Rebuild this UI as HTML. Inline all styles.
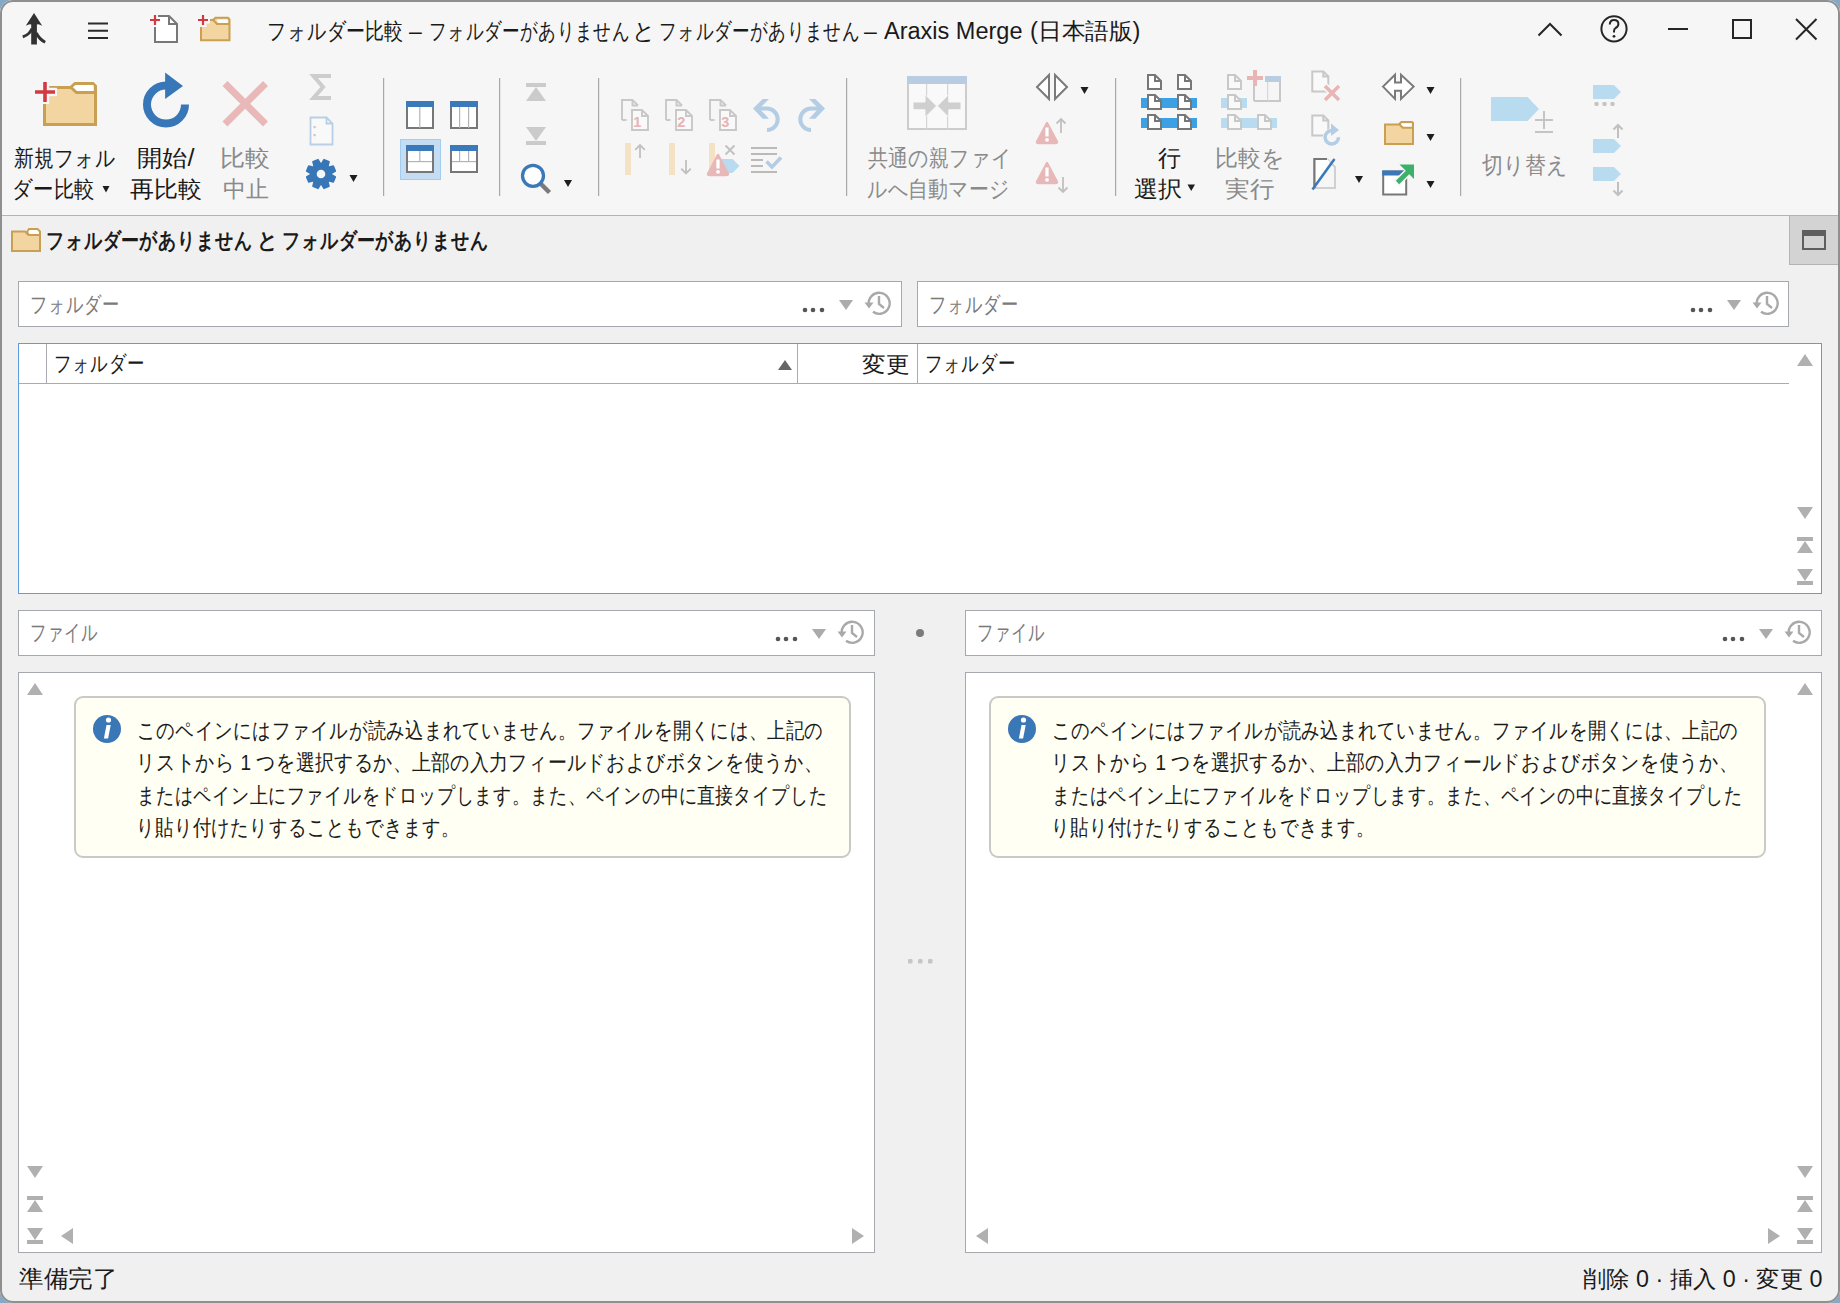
<!DOCTYPE html>
<html><head><meta charset="utf-8">
<style>
html,body{margin:0;padding:0}
body{width:1840px;height:1303px;position:relative;overflow:hidden;background:#86aac6;font-family:"Liberation Sans",sans-serif;color:#1a1a1a}
.a{position:absolute}
.win{left:0;top:0;width:1840px;height:1303px;border-radius:13px;background:#f0f0f0;overflow:hidden}
.frame{left:0;top:0;width:1840px;height:1303px;box-sizing:border-box;border:2px solid #8f8f8f;border-radius:13px;z-index:50}
.rib{left:0;top:0;width:1840px;height:215px;background:#f6f6f6;border-bottom:1px solid #b3b3b3}
.t{white-space:nowrap;transform-origin:0 0;line-height:30px}
.box{background:#fff;box-sizing:border-box;border:1px solid #a5a8ad}
svg{position:absolute;overflow:visible}
</style></head><body>
<div class="a win">
  <div class="a rib"></div>

  <!-- title -->
  <div class="a t" style="left:267.3px;top:16px;font-size:23px;transform:scaleX(0.827)">フォルダー比較</div>
  <div class="a t" style="left:409.0px;top:16px;font-size:23px;transform:scaleX(1.000)">–</div>
  <div class="a t" style="left:428.5px;top:16px;font-size:23px;transform:scaleX(0.764)">フォルダーがありません</div>
  <div class="a t" style="left:632.0px;top:16px;font-size:23px;transform:scaleX(1.000)">と</div>
  <div class="a t" style="left:658.5px;top:16px;font-size:23px;transform:scaleX(0.764)">フォルダーがありません</div>
  <div class="a t" style="left:864.0px;top:16px;font-size:23px;transform:scaleX(1.000)">–</div>
  <div class="a t" style="left:884.0px;top:16px;font-size:23px;transform:scaleX(1.022)">Araxis Merge</div>
  <div class="a t" style="left:1030.0px;top:16px;font-size:23px;transform:scaleX(1.029)">(日本語版)</div>

  <!-- ribbon labels -->
  <div class="a t" style="left:14px;top:143px;font-size:23px;transform:scaleX(0.862)">新規フォル</div>
  <div class="a t" style="left:12px;top:174px;font-size:23px;transform:scaleX(0.888)">ダー比較</div>
  <div class="a t" style="left:137px;top:143px;font-size:23px;transform:scaleX(1.098)">開始/</div>
  <div class="a t" style="left:130px;top:174px;font-size:23px;transform:scaleX(1.044)">再比較</div>
  <div class="a t" style="left:220px;top:143px;font-size:23px;color:#8a8a8a;transform:scaleX(1.093)">比較</div>
  <div class="a t" style="left:223px;top:174px;font-size:23px;color:#8a8a8a">中止</div>
  <div class="a t" style="left:868px;top:143px;font-size:23px;color:#8a8a8a;transform:scaleX(0.869)">共通の親ファイ</div>
  <div class="a t" style="left:867px;top:174px;font-size:23px;color:#8a8a8a;transform:scaleX(0.863)">ルへ自動マージ</div>
  <div class="a t" style="left:1158px;top:143px;font-size:23px">行</div>
  <div class="a t" style="left:1134px;top:174px;font-size:23px;transform:scaleX(1.045)">選択</div>
  <div class="a t" style="left:1215px;top:143px;font-size:23px;color:#8a8a8a">比較を</div>
  <div class="a t" style="left:1225px;top:174px;font-size:23px;color:#8a8a8a;transform:scaleX(1.068)">実行</div>
  <div class="a t" style="left:1482px;top:150px;font-size:23px;color:#8a8a8a;transform:scaleX(0.912)">切り替え</div>

  <!-- folder header -->
  <div class="a t" style="left:46.4px;top:226px;font-size:22px;font-weight:bold;transform:scaleX(0.819)">フォルダーがありません</div>
  <div class="a t" style="left:257.2px;top:226px;font-size:22px;font-weight:bold;transform:scaleX(0.933)">と</div>
  <div class="a t" style="left:282.4px;top:226px;font-size:22px;font-weight:bold;transform:scaleX(0.819)">フォルダーがありません</div>
  <div class="a" style="left:1789px;top:216px;width:49px;height:49px;background:#d3d3d3;box-sizing:border-box;border-left:1px solid #b4b4b4;border-bottom:1px solid #b4b4b4"></div>

  <!-- folder inputs -->
  <div class="a box" style="left:18px;top:281px;width:884px;height:46px"></div>
  <div class="a box" style="left:917px;top:281px;width:872px;height:46px"></div>
  <div class="a t" style="left:30px;top:290px;font-size:22px;color:#7a7a7a;transform:scaleX(0.782)">フォルダー</div>
  <div class="a t" style="left:929px;top:290px;font-size:22px;color:#7a7a7a;transform:scaleX(0.782)">フォルダー</div>

  <!-- folder list -->
  <div class="a" style="left:18px;top:343px;width:1804px;height:251px;background:#fff;box-sizing:border-box;border:1px solid #5d9de0"></div>
  <div class="a" style="left:19px;top:383px;width:1770px;height:1px;background:#a9abb0"></div>
  <div class="a" style="left:46px;top:344px;width:1px;height:39px;background:#a9abb0"></div>
  <div class="a" style="left:797px;top:344px;width:1px;height:39px;background:#a9abb0"></div>
  <div class="a" style="left:917px;top:344px;width:1px;height:39px;background:#a9abb0"></div>
  <div class="a t" style="left:54px;top:349px;font-size:22px;transform:scaleX(0.791)">フォルダー</div>
  <div class="a t" style="left:862px;top:350px;font-size:22px;transform:scaleX(1.071)">変更</div>
  <div class="a t" style="left:925px;top:349px;font-size:22px;transform:scaleX(0.791)">フォルダー</div>

  <!-- file inputs -->
  <div class="a box" style="left:18px;top:610px;width:857px;height:46px"></div>
  <div class="a box" style="left:965px;top:610px;width:857px;height:46px"></div>
  <div class="a t" style="left:30px;top:618px;font-size:22px;color:#7a7a7a;transform:scaleX(0.742)">ファイル</div>
  <div class="a t" style="left:977px;top:618px;font-size:22px;color:#7a7a7a;transform:scaleX(0.742)">ファイル</div>

  <!-- file panes -->
  <div class="a box" style="left:18px;top:672px;width:857px;height:581px"></div>
  <div class="a box" style="left:965px;top:672px;width:857px;height:581px"></div>

  <!-- info boxes -->
  <div class="a" style="left:74px;top:696px;width:777px;height:162px;box-sizing:border-box;border:2px solid #c9c9c6;border-radius:9px;background:#fffff4"></div>
  <div class="a" style="left:989px;top:696px;width:777px;height:162px;box-sizing:border-box;border:2px solid #c9c9c6;border-radius:9px;background:#fffff4"></div>
  <div class="a t" style="left:137px;top:716px;font-size:22px;transform:scaleX(0.836)">このペインにはファイルが読み込まれていません。ファイルを開くには、上記の</div>
  <div class="a t" style="left:136px;top:748px;font-size:22px;transform:scaleX(0.862)">リストから 1 つを選択するか、上部の入力フィールドおよびボタンを使うか、</div>
  <div class="a t" style="left:137px;top:781px;font-size:22px;transform:scaleX(0.817)">またはペイン上にファイルをドロップします。また、ペインの中に直接タイプした</div>
  <div class="a t" style="left:136px;top:813px;font-size:22px;transform:scaleX(0.834)">り貼り付けたりすることもできます。</div>
  <div class="a t" style="left:1052px;top:716px;font-size:22px;transform:scaleX(0.836)">このペインにはファイルが読み込まれていません。ファイルを開くには、上記の</div>
  <div class="a t" style="left:1051px;top:748px;font-size:22px;transform:scaleX(0.862)">リストから 1 つを選択するか、上部の入力フィールドおよびボタンを使うか、</div>
  <div class="a t" style="left:1052px;top:781px;font-size:22px;transform:scaleX(0.817)">またはペイン上にファイルをドロップします。また、ペインの中に直接タイプした</div>
  <div class="a t" style="left:1051px;top:813px;font-size:22px;transform:scaleX(0.834)">り貼り付けたりすることもできます。</div>

  <!-- status -->
  <div class="a t" style="left:19px;top:1264px;font-size:24px;transform:scaleX(1.022)">準備完了</div>
  <div class="a t" style="left:1583px;top:1264px;font-size:23px;transform:scaleX(1.013)">削除 0 · 挿入 0 · 変更 0</div>
</div>
<svg class="a" style="left:0;top:0;z-index:10" width="1840" height="1303" viewBox="0 0 1840 1303"><circle cx="805" cy="310" r="2.3" fill="#555"/><circle cx="813" cy="310" r="2.3" fill="#555"/><circle cx="822" cy="310" r="2.3" fill="#555"/><path d="M839,300 h14 l-7,10z" fill="#ababab"/><g fill="none" stroke="#a9a9a9" stroke-width="2.4"><path d="M868.8,305 A10.5,10.5 0 1 1 873,311.8"/><path d="M879,296 V304 L884,308"/></g><path d="M864.5,302.5 L873.5,302.5 L869,308.5Z" fill="#a9a9a9"/><circle cx="1693" cy="310" r="2.3" fill="#555"/><circle cx="1701" cy="310" r="2.3" fill="#555"/><circle cx="1710" cy="310" r="2.3" fill="#555"/><path d="M1727,300 h14 l-7,10z" fill="#ababab"/><g fill="none" stroke="#a9a9a9" stroke-width="2.4"><path d="M1756.8,305 A10.5,10.5 0 1 1 1761,311.8"/><path d="M1767,296 V304 L1772,308"/></g><path d="M1752.5,302.5 L1761.5,302.5 L1757,308.5Z" fill="#a9a9a9"/><circle cx="778" cy="639" r="2.3" fill="#555"/><circle cx="786" cy="639" r="2.3" fill="#555"/><circle cx="795" cy="639" r="2.3" fill="#555"/><path d="M812,629 h14 l-7,10z" fill="#ababab"/><g fill="none" stroke="#a9a9a9" stroke-width="2.4"><path d="M841.8,634 A10.5,10.5 0 1 1 846,640.8"/><path d="M852,625 V633 L857,637"/></g><path d="M837.5,631.5 L846.5,631.5 L842,637.5Z" fill="#a9a9a9"/><circle cx="1725" cy="639" r="2.3" fill="#555"/><circle cx="1733" cy="639" r="2.3" fill="#555"/><circle cx="1742" cy="639" r="2.3" fill="#555"/><path d="M1759,629 h14 l-7,10z" fill="#ababab"/><g fill="none" stroke="#a9a9a9" stroke-width="2.4"><path d="M1788.8,634 A10.5,10.5 0 1 1 1793,640.8"/><path d="M1799,625 V633 L1804,637"/></g><path d="M1784.5,631.5 L1793.5,631.5 L1789,637.5Z" fill="#a9a9a9"/><path d="M1797,366 h16 l-8,-12z" fill="#b0b0b0"/><path d="M1797,507 h16 l-8,12z" fill="#b0b0b0"/><rect x="1797" y="537" width="16" height="4" fill="#b0b0b0"/><path d="M1797,553 h16 l-8,-12z" fill="#b0b0b0"/><path d="M1797,569 h16 l-8,12z" fill="#b0b0b0"/><rect x="1797" y="581" width="16" height="4" fill="#b0b0b0"/><path d="M27,695 h16 l-8,-12z" fill="#b0b0b0"/><path d="M27,1166 h16 l-8,12z" fill="#b0b0b0"/><rect x="27" y="1196" width="16" height="4" fill="#b0b0b0"/><path d="M27,1212 h16 l-8,-12z" fill="#b0b0b0"/><path d="M27,1228 h16 l-8,12z" fill="#b0b0b0"/><rect x="27" y="1240" width="16" height="4" fill="#b0b0b0"/><path d="M73,1228 v16 l-12,-8z" fill="#b0b0b0"/><path d="M852,1228 v16 l12,-8z" fill="#b0b0b0"/><path d="M1797,695 h16 l-8,-12z" fill="#b0b0b0"/><path d="M1797,1166 h16 l-8,12z" fill="#b0b0b0"/><rect x="1797" y="1196" width="16" height="4" fill="#b0b0b0"/><path d="M1797,1212 h16 l-8,-12z" fill="#b0b0b0"/><path d="M1797,1228 h16 l-8,12z" fill="#b0b0b0"/><rect x="1797" y="1240" width="16" height="4" fill="#b0b0b0"/><path d="M988,1228 v16 l-12,-8z" fill="#b0b0b0"/><path d="M1768,1228 v16 l12,-8z" fill="#b0b0b0"/><path d="M778,370 h14 l-7,-10z" fill="#666"/><circle cx="920" cy="633" r="4" fill="#7c7c7c"/><rect x="908" y="959" width="4.5" height="4.5" rx="1.2" fill="#c6c6c6"/><rect x="918" y="959" width="4.5" height="4.5" rx="1.2" fill="#c6c6c6"/><rect x="928" y="959" width="4.5" height="4.5" rx="1.2" fill="#c6c6c6"/><circle cx="107" cy="729" r="14" fill="#3a77b7"/><circle cx="108.5" cy="720" r="2.6" fill="#fff"/><path d="M106.5,725 h4.2 l-2.6,13.5 h-4.2z" fill="#fff"/><circle cx="1022" cy="729" r="14" fill="#3a77b7"/><circle cx="1023.5" cy="720" r="2.6" fill="#fff"/><path d="M1021.5,725 h4.2 l-2.6,13.5 h-4.2z" fill="#fff"/><path d="M12,229 h14 l3,3 h-0 v0" fill="none"/><g stroke="#c9a052" stroke-width="2" stroke-linejoin="miter"><path d="M12,231.5 h13 l3,3 h12 v16.5 h-28z" fill="#f2d5a1"/><path d="M27,232 l2,-3 h8.5 l2.5,2.5 v3.5 h-11z" fill="#fff"/></g><rect x="1803" y="231" width="22" height="18" fill="#d3d3d3" stroke="#5e5e5e" stroke-width="2"/><rect x="1802" y="230" width="24" height="6" fill="#5e5e5e"/><!--ICONS--><g fill="#323232"><path d="M34,13 L42.2,25.8 Q38.5,23.6 36.9,24.6 V44.6 H31.2 V24.6 Q29.5,23.6 25.8,25.8 Z"/></g><path d="M31.8,28.5 Q30.5,34 22.8,36.9" fill="none" stroke="#323232" stroke-width="2.9"/><path d="M36.3,33 Q39.5,39.5 45.2,42.2" fill="none" stroke="#323232" stroke-width="2.9"/><path d="M88,23.5 H108 M88,30.8 H108 M88,38 H108" stroke="#2a2a2a" stroke-width="2"/><path d="M158,16 H169 L177,24 V42 H155 V27" fill="#fff" stroke="#787878" stroke-width="2"/><path d="M169,16 V24 H177" fill="none" stroke="#787878" stroke-width="2"/><path d="M150,20 H160 M155,15 V25" stroke="#d33a40" stroke-width="2.2"/><path d="M201,20 H213 L215.5,17.8 H228 L229.5,19.5 V40.2 H201 Z" fill="#f2d5a1" stroke="#c9a052" stroke-width="2"/><path d="M217.6,19.4 H227.8 V23.2 H218.8 L216.6,20.6Z" fill="#fff"/><path d="M213.2,20 L217,24 H229" fill="none" stroke="#c9a052" stroke-width="2"/><rect x="196" y="16.5" width="14" height="7.0" fill="#f6f6f6"/><rect x="199.5" y="13" width="7.0" height="14" fill="#f6f6f6"/><path d="M198,20 H208 M203,15 V25" stroke="#d33a40" stroke-width="2.2"/><g fill="none" stroke="#262626" stroke-width="2"><path d="M1538.5,35.5 L1550,24 L1561.5,35.5"/><circle cx="1614" cy="28.8" r="12.6"/><path d="M1609.8,24.6 Q1609.8,20 1614,20 Q1618.4,20 1618.4,24 Q1618.4,26.6 1615.6,28 Q1614,28.9 1614,31.2 V32.6"/><path d="M1668,29 H1688"/><rect x="1733" y="20" width="18" height="18"/><path d="M1796,19 L1816.5,39.5 M1816.5,19 L1796,39.5"/></g><circle cx="1614" cy="36.3" r="1.4" fill="#262626"/><path d="M44.5,87.5 H70.5 L75,83.5 H93 L95.5,86 V124.5 H44.5 Z" fill="#f2d5a1" stroke="#c9a052" stroke-width="3"/><path d="M75.6,85 H93.5 V91.5 H77.6 L72.8,87.3 Z" fill="#fff"/><path d="M71,87.5 L76.4,92.6 H97" fill="none" stroke="#c9a052" stroke-width="3"/><rect x="33" y="87.8" width="24" height="8.4" fill="#f6f6f6"/><rect x="40.800000000000004" y="80" width="8.4" height="24" fill="#f6f6f6"/><path d="M35,92 H55 M45,82 V102" stroke="#d33a40" stroke-width="3.6"/><path d="M185,104.6 A19,19 0 1 1 166,85.6" fill="none" stroke="#3777b8" stroke-width="8"/><path d="M165.1,72.6 L183,86 L165.1,99.1 Z" fill="#3777b8"/><path d="M225,83.5 L265.5,124 M265.5,83.5 L225,124" stroke="#e9b8b8" stroke-width="7"/><path d="M331,76 H313.5 L323,87 L313.5,98 H331" fill="none" stroke="#cdcdcd" stroke-width="4" stroke-linejoin="miter"/><path d="M310.5,117.5 H326.5 L332.5,123.5 V144.5 H310.5 Z" fill="#f9f9f9" stroke="#b9cfe6" stroke-width="1.8" stroke-linejoin="miter"/><path d="M326.5,117.5 V123.5 H332.5" fill="none" stroke="#b9cfe6" stroke-width="1.8"/><rect x="313.5" y="126" width="2.2" height="2.2" fill="#c8c8c8"/><rect x="313.5" y="134" width="2.2" height="2.2" fill="#c8c8c8"/><g fill="#3777b8" stroke="#3777b8" stroke-width="1.6" stroke-linejoin="round"><circle cx="321" cy="174" r="10.2"/><path d="M317.4,165.5 L318.3,159.6 H323.7 L324.6,165.5 Z" transform="rotate(22.5 321 174)"/><path d="M317.4,165.5 L318.3,159.6 H323.7 L324.6,165.5 Z" transform="rotate(67.5 321 174)"/><path d="M317.4,165.5 L318.3,159.6 H323.7 L324.6,165.5 Z" transform="rotate(112.5 321 174)"/><path d="M317.4,165.5 L318.3,159.6 H323.7 L324.6,165.5 Z" transform="rotate(157.5 321 174)"/><path d="M317.4,165.5 L318.3,159.6 H323.7 L324.6,165.5 Z" transform="rotate(202.5 321 174)"/><path d="M317.4,165.5 L318.3,159.6 H323.7 L324.6,165.5 Z" transform="rotate(247.5 321 174)"/><path d="M317.4,165.5 L318.3,159.6 H323.7 L324.6,165.5 Z" transform="rotate(292.5 321 174)"/><path d="M317.4,165.5 L318.3,159.6 H323.7 L324.6,165.5 Z" transform="rotate(337.5 321 174)"/></g><circle cx="321" cy="174" r="4.3" fill="#f6f6f6"/><path d="M349.5,175 h8 l-4.0,7z" fill="#1e1e1e"/><path d="M102.5,186 h7 l-3.5,6.5z" fill="#1e1e1e"/><rect x="383" y="78" width="1.2" height="118" fill="#a9a9a9"/><rect x="499" y="78" width="1.2" height="118" fill="#a9a9a9"/><rect x="598" y="78" width="1.2" height="118" fill="#a9a9a9"/><rect x="846" y="78" width="1.2" height="118" fill="#a9a9a9"/><rect x="1115" y="78" width="1.2" height="118" fill="#a9a9a9"/><rect x="1460" y="78" width="1.2" height="118" fill="#a9a9a9"/><rect x="400.5" y="139.5" width="40" height="40" fill="#c5ddf2" stroke="#a2cdf0" stroke-width="1"/><rect x="407" y="102" width="26" height="26" fill="#fff" stroke="#777" stroke-width="2"/><rect x="406" y="101" width="28" height="6" fill="#3a7abb"/><rect x="419.2" y="107" width="1.2" height="21" fill="#b4b4b4"/><rect x="451" y="102" width="26" height="26" fill="#fff" stroke="#777" stroke-width="2"/><rect x="450" y="101" width="28" height="6" fill="#3a7abb"/><rect x="459" y="107" width="1.2" height="21" fill="#b4b4b4"/><rect x="468" y="107" width="1.2" height="21" fill="#b4b4b4"/><rect x="407" y="146" width="26" height="26" fill="#fff" stroke="#777" stroke-width="2"/><rect x="406" y="145" width="28" height="6" fill="#3a7abb"/><rect x="419.2" y="151" width="1.2" height="10.5" fill="#b4b4b4"/><rect x="408" y="161" width="24" height="1.2" fill="#b4b4b4"/><rect x="451" y="146" width="26" height="26" fill="#fff" stroke="#777" stroke-width="2"/><rect x="450" y="145" width="28" height="6" fill="#3a7abb"/><rect x="459" y="151" width="1.2" height="10.5" fill="#b4b4b4"/><rect x="468" y="151" width="1.2" height="10.5" fill="#b4b4b4"/><rect x="452" y="161" width="24" height="1.2" fill="#b4b4b4"/><rect x="526" y="83" width="20" height="4" fill="#cbcbcb"/><path d="M526,101 H546 L536,87 Z" fill="#cbcbcb"/><path d="M526,127 H546 L536,141 Z" fill="#cbcbcb"/><rect x="526" y="141" width="20" height="4" fill="#cbcbcb"/><path d="M540.5,183.5 L549.5,192.5" stroke="#7a7a7a" stroke-width="4.5"/><circle cx="533" cy="175.8" r="10.5" fill="#fff" stroke="#3a78b8" stroke-width="3.3"/><path d="M564,180 h8 l-4.0,7z" fill="#1e1e1e"/><path d="M622,120 V100 H632.5 L638,105.5" fill="none" stroke="#c8c8c8" stroke-width="1.9"/><path d="M632.5,100 V105.5 H638" fill="none" stroke="#c8c8c8" stroke-width="1.9"/><path d="M622,120 H626.5" stroke="#c8c8c8" stroke-width="1.9"/><path d="M632,110 H642 L648,116 V130 H632 Z" fill="#f9f9f9" stroke="#c8c8c8" stroke-width="1.9" stroke-linejoin="miter"/><path d="M642,110 V116 H648" fill="none" stroke="#c8c8c8" stroke-width="1.9"/><text x="637.3" y="127" font-family="Liberation Sans" font-weight="bold" font-size="14.5" fill="#e7b3b3" text-anchor="middle">1</text><path d="M666,120 V100 H676.5 L682,105.5" fill="none" stroke="#c8c8c8" stroke-width="1.9"/><path d="M676.5,100 V105.5 H682" fill="none" stroke="#c8c8c8" stroke-width="1.9"/><path d="M666,120 H670.5" stroke="#c8c8c8" stroke-width="1.9"/><path d="M676,110 H686 L692,116 V130 H676 Z" fill="#f9f9f9" stroke="#c8c8c8" stroke-width="1.9" stroke-linejoin="miter"/><path d="M686,110 V116 H692" fill="none" stroke="#c8c8c8" stroke-width="1.9"/><text x="681.3" y="127" font-family="Liberation Sans" font-weight="bold" font-size="14.5" fill="#e7b3b3" text-anchor="middle">2</text><path d="M710,120 V100 H720.5 L726,105.5" fill="none" stroke="#c8c8c8" stroke-width="1.9"/><path d="M720.5,100 V105.5 H726" fill="none" stroke="#c8c8c8" stroke-width="1.9"/><path d="M710,120 H714.5" stroke="#c8c8c8" stroke-width="1.9"/><path d="M720,110 H730 L736,116 V130 H720 Z" fill="#f9f9f9" stroke="#c8c8c8" stroke-width="1.9" stroke-linejoin="miter"/><path d="M730,110 V116 H736" fill="none" stroke="#c8c8c8" stroke-width="1.9"/><text x="725.3" y="127" font-family="Liberation Sans" font-weight="bold" font-size="14.5" fill="#e7b3b3" text-anchor="middle">3</text><path d="M756,108.6 H767 A10.7,10.7 0 0 1 767,130" fill="none" stroke="#b4cce4" stroke-width="4"/><path d="M762.7,99 H769 L759.5,108.6 L769,118.8 H762.7 L753,108.6 Z" fill="#b4cce4"/><path d="M822,108.6 H811 A10.7,10.7 0 0 0 811,130" fill="none" stroke="#b4cce4" stroke-width="4"/><path d="M815.3,99 H809 L818.5,108.6 L809,118.8 H815.3 L825,108.6 Z" fill="#b4cce4"/><rect x="625" y="143" width="6" height="32" fill="#f5e2c4"/><path d="M640,158 V146 M635.2,149.8 L640,145 L644.8,149.8" fill="none" stroke="#c0c0c0" stroke-width="1.8"/><rect x="669" y="143" width="6" height="32" fill="#f5e2c4"/><path d="M686,160 V172.5 M681.2,168.7 L686,173.5 L690.8,168.7" fill="none" stroke="#c0c0c0" stroke-width="1.8"/><rect x="709" y="143" width="6" height="26" fill="#f5e2c4"/><path d="M718,159 H732.5 L739.5,166.0 L732.5,173 H718 Z" fill="#b8dbef"/><path d="M718.0,155 L727.5,173 Q729,175 726,175 H710 Q707,175 708.5,173 Z" fill="#e8b8b8" stroke="#e8b8b8" stroke-width="2.5" stroke-linejoin="round"/><rect x="716.4" y="159.5" width="3.2" height="9" fill="#fff"/><circle cx="718.0" cy="171.8" r="1.9" fill="#fff"/><path d="M725.5,145.5 L734.5,154.5 M734.5,145.5 L725.5,154.5" stroke="#c0c0c0" stroke-width="1.8"/><rect x="751" y="147" width="26" height="2" fill="#bababa"/><rect x="751" y="153" width="26" height="2" fill="#bababa"/><rect x="751" y="159" width="12" height="2" fill="#bababa"/><rect x="751" y="165" width="12" height="2" fill="#bababa"/><rect x="751" y="171" width="26" height="2" fill="#bababa"/><path d="M766.5,161.5 L772,167 L781,157.5" fill="none" stroke="#b4cce4" stroke-width="3.6"/><rect x="908" y="77" width="58" height="52" fill="#f9f9f9" stroke="#cccccc" stroke-width="2"/><rect x="907" y="76" width="60" height="8" fill="#b8cde2"/><rect x="926" y="84" width="1.2" height="45" fill="#d4d4d4"/><rect x="947" y="84" width="1.2" height="45" fill="#d4d4d4"/><path d="M913,102 H925 V94.4 L936.6,105.9 L925,117.4 V109.8 H913 Z" fill="#cfcfcf" stroke="#f9f9f9" stroke-width="1"/><path d="M961,102 H948.8 V94.4 L937.4,105.9 L948.8,117.4 V109.8 H961 Z" fill="#cfcfcf" stroke="#f9f9f9" stroke-width="1"/><path d="M1049,75 V99 L1037,87 Z M1055,75 V99 L1067,87 Z" fill="#fff" stroke="#7a7a7a" stroke-width="2" stroke-linejoin="miter"/><path d="M1080.5,87 h8 l-4.0,7z" fill="#1e1e1e"/><path d="M1047.0,123 L1056.5,141 Q1058,143 1055,143 H1039 Q1036,143 1037.5,141 Z" fill="#e8b8b8" stroke="#e8b8b8" stroke-width="2.5" stroke-linejoin="round"/><rect x="1045.4" y="127.5" width="3.2" height="9" fill="#fff"/><circle cx="1047.0" cy="139.8" r="1.9" fill="#fff"/><path d="M1061,133 V120 M1056.5,123.5 L1061,119 L1065.5,123.5" fill="none" stroke="#c0c0c0" stroke-width="1.8"/><path d="M1047.0,163 L1056.5,181 Q1058,183 1055,183 H1039 Q1036,183 1037.5,181 Z" fill="#e8b8b8" stroke="#e8b8b8" stroke-width="2.5" stroke-linejoin="round"/><rect x="1045.4" y="167.5" width="3.2" height="9" fill="#fff"/><circle cx="1047.0" cy="179.8" r="1.9" fill="#fff"/><path d="M1063,177 V191 M1058.5,187.5 L1063,192 L1067.5,187.5" fill="none" stroke="#c0c0c0" stroke-width="1.8"/><rect x="1141" y="98" width="56" height="10" fill="#3ca0e4"/><rect x="1141" y="118" width="56" height="10" fill="#3ca0e4"/><path d="M1148,75 H1155 L1161,81 V89 H1148 Z" fill="#fff" stroke="#777" stroke-width="2" stroke-linejoin="miter"/><path d="M1155,75 V81 H1161" fill="none" stroke="#777" stroke-width="2"/><path d="M1148,95 H1155 L1161,101 V109 H1148 Z" fill="#fff" stroke="#777" stroke-width="2" stroke-linejoin="miter"/><path d="M1155,95 V101 H1161" fill="none" stroke="#777" stroke-width="2"/><path d="M1148,115 H1155 L1161,121 V129 H1148 Z" fill="#fff" stroke="#777" stroke-width="2" stroke-linejoin="miter"/><path d="M1155,115 V121 H1161" fill="none" stroke="#777" stroke-width="2"/><path d="M1178,75 H1185 L1191,81 V89 H1178 Z" fill="#fff" stroke="#777" stroke-width="2" stroke-linejoin="miter"/><path d="M1185,75 V81 H1191" fill="none" stroke="#777" stroke-width="2"/><path d="M1178,95 H1185 L1191,101 V109 H1178 Z" fill="#fff" stroke="#777" stroke-width="2" stroke-linejoin="miter"/><path d="M1185,95 V101 H1191" fill="none" stroke="#777" stroke-width="2"/><path d="M1178,115 H1185 L1191,121 V129 H1178 Z" fill="#fff" stroke="#777" stroke-width="2" stroke-linejoin="miter"/><path d="M1185,115 V121 H1191" fill="none" stroke="#777" stroke-width="2"/><rect x="1221" y="98" width="26" height="10" fill="#b9dbf0"/><rect x="1221" y="118" width="56" height="10" fill="#b9dbf0"/><path d="M1228,75 H1235 L1241,81 V89 H1228 Z" fill="#f9f9f9" stroke="#c8c8c8" stroke-width="2" stroke-linejoin="miter"/><path d="M1235,75 V81 H1241" fill="none" stroke="#c8c8c8" stroke-width="2"/><path d="M1228,95 H1235 L1241,101 V109 H1228 Z" fill="#f9f9f9" stroke="#c8c8c8" stroke-width="2" stroke-linejoin="miter"/><path d="M1235,95 V101 H1241" fill="none" stroke="#c8c8c8" stroke-width="2"/><path d="M1228,115 H1235 L1241,121 V129 H1228 Z" fill="#f9f9f9" stroke="#c8c8c8" stroke-width="2" stroke-linejoin="miter"/><path d="M1235,115 V121 H1241" fill="none" stroke="#c8c8c8" stroke-width="2"/><path d="M1258,115 H1265 L1271,121 V129 H1258 Z" fill="#f9f9f9" stroke="#c8c8c8" stroke-width="2" stroke-linejoin="miter"/><path d="M1265,115 V121 H1271" fill="none" stroke="#c8c8c8" stroke-width="2"/><path d="M1254,101 V84 M1280,82 V101 H1254" fill="none" stroke="#c8c8c8" stroke-width="2"/><rect x="1267" y="82" width="1.2" height="19" fill="#d8d8d8"/><rect x="1265" y="76" width="16" height="6" fill="#b8cce2"/><path d="M1247,78 H1263 M1255,70 V86" stroke="#e8b4b4" stroke-width="4"/><path d="M1312.3,71.4 H1323.3 L1328.3,76.4 V91.4 H1312.3 Z" fill="#f9f9f9" stroke="#c8c8c8" stroke-width="2" stroke-linejoin="miter"/><path d="M1323.3,71.4 V76.4 H1328.3" fill="none" stroke="#c8c8c8" stroke-width="2"/><path d="M1325,86 L1339,100 M1339,86 L1325,100" stroke="#f6f6f6" stroke-width="7"/><path d="M1325,86 L1339,100 M1339,86 L1325,100" stroke="#e8b4b4" stroke-width="3.5"/><path d="M1312.3,115.4 H1323.3 L1328.3,120.4 V135.4 H1312.3 Z" fill="#f9f9f9" stroke="#c8c8c8" stroke-width="2" stroke-linejoin="miter"/><path d="M1323.3,115.4 V120.4 H1328.3" fill="none" stroke="#c8c8c8" stroke-width="2"/><circle cx="1331.8" cy="137.3" r="9" fill="#f6f6f6"/><path d="M1338.5,137.3 A6.7,6.7 0 1 1 1331.5,130.6" fill="none" stroke="#b4cce4" stroke-width="3.5"/><path d="M1331,123.5 L1339,130 L1331,136 Z" fill="#b4cce4"/><path d="M1327,159 L1335,167 V188 H1314.5" fill="none" stroke="#d0d0d0" stroke-width="2"/><path d="M1314.5,188 V159 H1327" fill="#fff" stroke="#777" stroke-width="2"/><path d="M1314.5,188 L1327,171" fill="none"/><path d="M1313.5,159 H1327 L1330,162 L1314.5,184 V159Z" fill="#fff"/><path d="M1314.5,186 V159 H1327" fill="none" stroke="#777" stroke-width="2"/><path d="M1312.5,189.5 L1334.5,159" stroke="#3a78b8" stroke-width="2.5"/><path d="M1355,176 h8 l-4.0,7z" fill="#1e1e1e"/><path d="M1383,86.6 L1395,74.7 V82.5 H1401 V74.7 L1413.6,86.6 L1401,98.9 V90.7 H1395 V98.9 Z" fill="#fff" stroke="#7a7a7a" stroke-width="2" stroke-linejoin="miter"/><path d="M1426.5,87 h8 l-4.0,7z" fill="#1e1e1e"/><path d="M1385.0,124.5 H1398.5 L1401.5,122.0 H1412.0 L1413.0,123.0 V144.0 H1385.0 Z" fill="#f2d5a1" stroke="#c9a052" stroke-width="2"/><path d="M1402.0,123.2 H1411.6 V127.2 H1403.5 L1400.8,124.6 Z" fill="#fff"/><path d="M1399.5,124.5 L1402.8,127.8 H1413.0" fill="none" stroke="#c9a052" stroke-width="2"/><path d="M1426.5,134 h8 l-4.0,7z" fill="#1e1e1e"/><rect x="1383.2" y="171.5" width="23" height="23" fill="#fff" stroke="#777" stroke-width="2"/><rect x="1382.2" y="170.5" width="25" height="5" fill="#3a78b8"/><path d="M1396.5,183.5 L1409,171" stroke="#f6f6f6" stroke-width="8"/><path d="M1397.5,182.5 L1409.5,170.5" stroke="#3db06a" stroke-width="4.6"/><path d="M1399.5,164.5 H1414 V179 Z" fill="#3db06a"/><path d="M1426.5,181 h8 l-4.0,7z" fill="#1e1e1e"/><path d="M1491,97 H1527.5 L1539,109.0 L1527.5,121 H1491 Z" fill="#b8dbef"/><path d="M1544,111 V129 M1535,120 H1553 M1535,132 H1553" stroke="#c4c4c4" stroke-width="2"/><path d="M1593,85 H1614 L1621,92.0 L1614,99 H1593 Z" fill="#b8dbef"/><rect x="1594.5" y="102" width="4" height="4" rx="1.2" fill="#c4c4c4"/><rect x="1602.5" y="102" width="4" height="4" rx="1.2" fill="#c4c4c4"/><rect x="1610.5" y="102" width="4" height="4" rx="1.2" fill="#c4c4c4"/><path d="M1593,139 H1614 L1621,146.0 L1614,153 H1593 Z" fill="#b8dbef"/><path d="M1618,138 V126 M1613.5,129.5 L1618,125 L1622.5,129.5" fill="none" stroke="#c0c0c0" stroke-width="2"/><path d="M1593,167 H1614 L1621,174.0 L1614,181 H1593 Z" fill="#b8dbef"/><path d="M1618,182 V194 M1613.5,190.5 L1618,195 L1622.5,190.5" fill="none" stroke="#c0c0c0" stroke-width="2"/><path d="M1187.5,184.5 h7.5 l-3.75,6.5z" fill="#1e1e1e"/><!--/ICONS--></svg>
<div class="a frame"></div>
</body></html>
